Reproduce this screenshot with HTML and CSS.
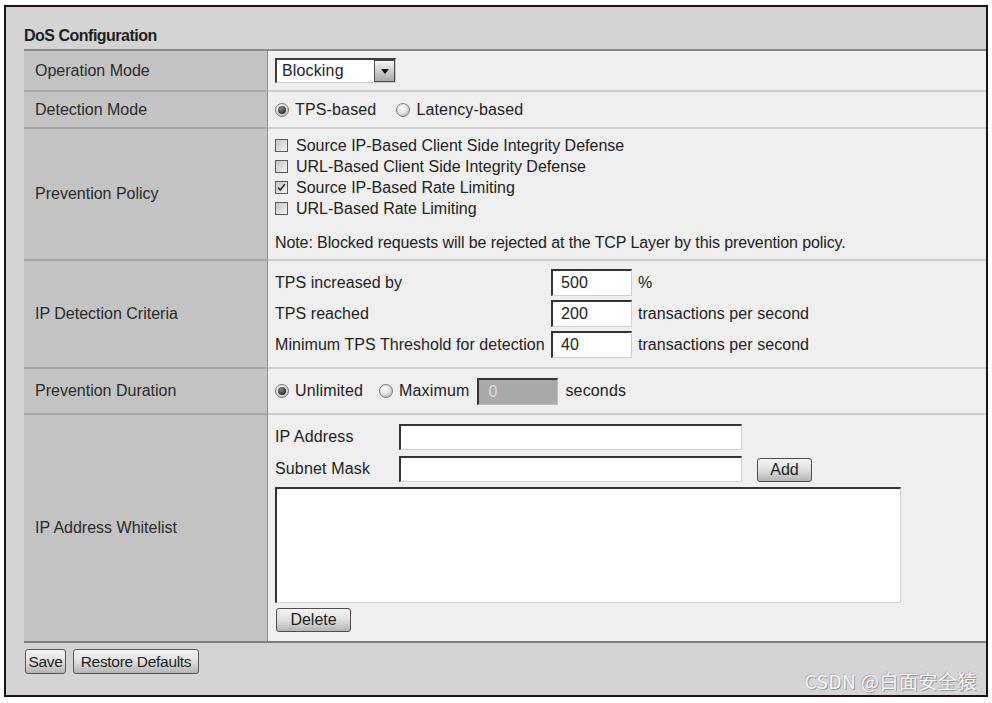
FILE: index.html
```html
<!DOCTYPE html>
<html>
<head>
<meta charset="utf-8">
<link rel="stylesheet" href="styles.css">
</head>
<body>
<div class="frame">
  <div class="title">DoS Configuration</div>
  <div class="table">
    <div class="row r1 first">
      <div class="label">Operation Mode</div>
      <div class="value">
        <div class="select"><span class="sel-text">Blocking</span><span class="sel-btn"><span class="tri"></span></span></div>
      </div>
    </div>
    <div class="row r2">
      <div class="label">Detection Mode</div>
      <div class="value">
        <span class="opt"><span class="radio on"></span>TPS-based</span>
        <span class="opt opt2"><span class="radio"></span>Latency-based</span>
      </div>
    </div>
    <div class="row r3">
      <div class="label">Prevention Policy</div>
      <div class="value col">
        <div class="checks">
          <div class="chk-line"><span class="check"></span>Source IP-Based Client Side Integrity Defense</div>
          <div class="chk-line"><span class="check"></span>URL-Based Client Side Integrity Defense</div>
          <div class="chk-line"><span class="check on"><svg viewBox="0 0 13 13" width="11" height="11"><path d="M2.5 6.5 L5 9.5 L10.5 2.5" fill="none" stroke="#222" stroke-width="1.8"/></svg></span>Source IP-Based Rate Limiting</div>
          <div class="chk-line"><span class="check"></span>URL-Based Rate Limiting</div>
        </div>
        <div class="note">Note: Blocked requests will be rejected at the TCP Layer by this prevention policy.</div>
      </div>
    </div>
    <div class="row r4">
      <div class="label">IP Detection Criteria</div>
      <div class="value col">
        <div class="criteria">
          <span>TPS increased by</span><span class="input num">500</span><span>%</span>
          <span>TPS reached</span><span class="input num">200</span><span>transactions per second</span>
          <span>Minimum TPS Threshold for detection</span><span class="input num">40</span><span>transactions per second</span>
        </div>
      </div>
    </div>
    <div class="row r5">
      <div class="label">Prevention Duration</div>
      <div class="value">
        <span class="opt"><span class="radio on"></span>Unlimited</span>
        <span class="opt opt3"><span class="radio"></span>Maximum</span>
        <span class="input disabled">0</span>
        <span class="unit">seconds</span>
      </div>
    </div>
    <div class="row r6">
      <div class="label">IP Address Whitelist</div>
      <div class="value col">
        <div class="wl-grid">
          <span>IP Address</span><span class="input wide"></span><span></span>
          <span>Subnet Mask</span><span class="input wide"></span><span class="btn add">Add</span>
        </div>
        <div class="textarea"></div>
        <div><span class="btn del">Delete</span></div>
      </div>
    </div>
  </div>
  <div class="actions">
    <span class="btn small save">Save</span>
    <span class="btn small restore">Restore Defaults</span>
  </div>
  <div class="watermark">CSDN @白面安全猿</div>
</div>
</body>
</html>
```
FILE: styles.css
```css
html, body {
  margin: 0;
  padding: 0;
  background: #ffffff;
}
body {
  font-family: "Liberation Sans", Arial, sans-serif;
  font-size: 16px;
  color: #222222;
}
.frame {
  position: relative;
  margin: 5px 4px 0 4px;
  height: 692px;
  box-sizing: border-box;
  border: 2px solid #1c1212;
  background: #d4d4d4;
}
.title {
  padding: 19px 0 0 18px;
  height: 20px;
  line-height: 20px;
  font-weight: bold;
  font-size: 16px;
  letter-spacing: -0.5px;
  color: #1e1e1e;
  margin-bottom: 3px;
}
.table {
  margin-left: 18px;
  border-bottom: 2px solid #7d7d7d;
}
.row {
  display: grid;
  grid-template-columns: 244px 1fr;
}
.label {
  background: #c3c3c3;
  border-right: 1px solid #8e8e8e;
  border-top: 2px solid #a6a6a6;
  box-sizing: border-box;
  padding-left: 11px;
  display: flex;
  align-items: center;
  color: #2a2a2a;
}
.value {
  background: #efefef;
  border-top: 2px solid #cbcbcb;
  box-sizing: border-box;
  padding-left: 7px;
  display: flex;
  align-items: center;
  letter-spacing: 0.15px;
  white-space: nowrap;
}
.value.col {
  flex-direction: column;
  align-items: flex-start;
  justify-content: flex-start;
}
.row.first .label, .row.first .value {
  border-top-color: #8a8a8a;
}
.r1 { height: 41px; }
.r2 { height: 37px; }
.r3 { height: 132px; }
.r4 { height: 108px; }
.r5 { height: 46px; }
.r6 { height: 228px; }

/* select */
.select {
  display: flex;
  width: 121px;
  height: 25px;
  box-sizing: border-box;
  border-top: 2px solid #3c3c3c;
  border-left: 2px solid #3c3c3c;
  border-right: 1px solid #c8c8c8;
  border-bottom: 1px solid #c8c8c8;
  background: #fff;
}
.sel-text {
  flex: 1;
  padding-left: 5px;
  line-height: 21px;
}
.sel-btn {
  width: 21px;
  box-sizing: border-box;
  border: 1px solid #4a4a4a;
  background: linear-gradient(#f2f2f2, #a9a9a9);
  display: flex;
  align-items: center;
  justify-content: center;
}
.tri {
  width: 0;
  height: 0;
  border-left: 4px solid transparent;
  border-right: 4px solid transparent;
  border-top: 5px solid #111;
}

/* radios */
.opt {
  display: inline-flex;
  align-items: center;
}
.opt2 { margin-left: 20px; }
.opt3 { margin-left: 16px; }
.radio {
  position: relative;
  width: 14px;
  height: 14px;
  box-sizing: border-box;
  border-radius: 50%;
  border: 1px solid #7a7a7a;
  background: radial-gradient(circle at 40% 35%, #ffffff 0%, #e0e0e0 50%, #a0a0a0 100%);
  margin-right: 6px;
}
.radio.on::after {
  content: "";
  position: absolute;
  left: 2px;
  top: 2px;
  width: 8px;
  height: 8px;
  border-radius: 50%;
  background: radial-gradient(circle at 40% 35%, #8a8a8a 0%, #3a3a3a 60%, #1e1e1e 100%);
}

/* checkboxes */
.checks {
  padding-top: 6px;
  letter-spacing: 0;
}
.chk-line {
  height: 21px;
  display: flex;
  align-items: center;
}
.check {
  width: 13px;
  height: 13px;
  box-sizing: border-box;
  border: 1px solid #5a5a5a;
  background: linear-gradient(135deg, #c4c4c4, #f4f4f4);
  margin-right: 8px;
  display: inline-flex;
  align-items: center;
  justify-content: center;
}
.note {
  margin-top: 13px;
  line-height: 21px;
  font-size: 16px;
  letter-spacing: -0.1px;
}

/* inputs */
.input {
  display: inline-block;
  box-sizing: border-box;
  background: #fff;
  border-top: 2px solid #333;
  border-left: 2px solid #333;
  border-right: 1px solid #cfcfcf;
  border-bottom: 1px solid #cfcfcf;
}
.criteria {
  display: grid;
  grid-template-columns: 270px 81px auto;
  column-gap: 6px;
  row-gap: 4px;
  align-items: center;
  padding-top: 8px;
  letter-spacing: 0.05px;
}
.input.num {
  width: 81px;
  height: 27px;
  padding-left: 8px;
  line-height: 24px;
}
.input.disabled {
  width: 81px;
  height: 27px;
  margin-left: 8px;
  background: #a9a9a9;
  color: #dcdcdc;
  padding-left: 9px;
  line-height: 24px;
  border-right-color: #bdbdbd;
  border-bottom-color: #bdbdbd;
}
.unit {
  margin-left: 7px;
}

/* whitelist */
.wl-grid {
  display: grid;
  grid-template-columns: 110px 343px auto;
  column-gap: 14px;
  row-gap: 6px;
  align-items: center;
  padding-top: 9px;
}
.input.wide {
  width: 343px;
  height: 26px;
}
.textarea {
  margin-top: 5px;
  width: 626px;
  height: 116px;
  box-sizing: border-box;
  background: #fff;
  border-top: 2px solid #333;
  border-left: 2px solid #333;
  border-right: 1px solid #cfcfcf;
  border-bottom: 1px solid #cfcfcf;
}
.btn {
  display: inline-flex;
  align-items: center;
  justify-content: center;
  box-sizing: border-box;
  height: 24px;
  border: 1px solid #4e4e4e;
  border-radius: 3px;
  background: linear-gradient(#f4f4f4 0%, #e2e2e2 45%, #b4b4b4 100%);
  color: #1e1e1e;
  font-size: 16px;
  letter-spacing: 0;
}
.btn.add {
  width: 55px;
  margin-top: 2px;
  margin-left: 1px;
}
.btn.del {
  width: 75px;
  margin-top: 5px;
  margin-left: 1px;
}
.actions {
  display: flex;
  gap: 7px;
  padding: 6px 0 0 19px;
}
.btn.small {
  height: 25px;
  font-size: 15.5px;
  letter-spacing: -0.3px;
  border-color: #555;
}
.btn.save { width: 41px; }
.btn.restore { width: 126px; }
.watermark {
  position: absolute;
  right: 9px;
  bottom: 1px;
  font-family: "Noto Sans CJK SC", sans-serif;
  font-size: 19px;
  color: #f4f4f4;
  text-shadow: 1px 1px 0 #9a9a9a, -1px -1px 0 #b8b8b8;
  letter-spacing: 0.5px;
}
```
